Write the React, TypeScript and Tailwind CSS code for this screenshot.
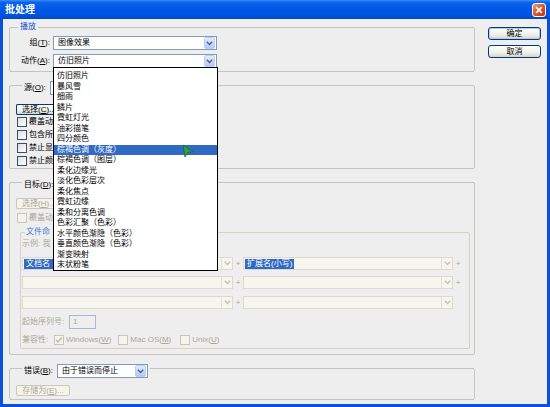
import React from "react";

const Chevron = ({ color = "#4D6185" }: { color?: string }) => (
  <svg width="7" height="5" viewBox="0 0 7 5">
    <path d="M0.8 0.8 L3.5 3.6 L6.2 0.8" fill="none" stroke={color} strokeWidth="1.4" />
  </svg>
);

function Select({ w, text }: { w: string; text?: string }) {
  return (
    <div className={`flex h-[14px] ${w} items-center border border-[#7F9DB9] bg-white`}>
      {text && <span className="pl-[4px] leading-none">{text}</span>}
      <div className="ml-auto mr-px flex h-[12px] w-[11px] items-center justify-center rounded-[2px] border border-[#B9CEF7] bg-[linear-gradient(180deg,#E3ECFD,#B3CAF8)]">
        <Chevron />
      </div>
    </div>
  );
}

function DSelect({ w, hl, hlw }: { w: string; hl?: string; hlw?: string }) {
  return (
    <div className={`flex h-[13px] ${w} items-center border border-[#DCDACB] bg-[#F6F5F0]`}>
      {hl && (
        <span className={`ml-px ${hlw ?? ""} whitespace-nowrap bg-[#316AC5] px-[2px] leading-[10px] text-white`}>{hl}</span>
      )}
      <div className="ml-auto flex h-full w-[11px] items-center justify-center border-l border-[#E2E0D4]">
        <Chevron color="#C6C4B6" />
      </div>
    </div>
  );
}

function Check({ disabled, checked }: { disabled?: boolean; checked?: boolean }) {
  return (
    <div
      className={
        disabled
          ? "flex h-[10px] w-[10px] shrink-0 items-center justify-center border border-[#C9C7BA] bg-[#F4F3EE]"
          : "flex h-[10px] w-[10px] shrink-0 items-center justify-center border border-[#35506C] bg-[linear-gradient(135deg,#DEDED9,#FFFFFF)]"
      }
    >
      {checked && (
        <svg width="8" height="8" viewBox="0 0 8 8">
          <path d="M1 4 L3 6 L7 1.5" fill="none" stroke="#BDBBAE" strokeWidth="1.4" />
        </svg>
      )}
    </div>
  );
}

const U = ({ c }: { c: string }) => <span className="underline underline-offset-1">{c}</span>;

const Plus = () => <span className="w-[10px] text-center text-[#ACA899]">+</span>;

const items = [
  "仿旧照片",
  "暴风雪",
  "细雨",
  "鳞片",
  "霓虹灯光",
  "油彩描笔",
  "四分颜色",
  "棕褐色调（灰度）",
  "棕褐色调（图层）",
  "柔化边缘光",
  "淡化色彩层次",
  "柔化焦点",
  "霓虹边缘",
  "柔和分离色调",
  "色彩汇聚（色彩）",
  "水平颜色渐隐（色彩）",
  "垂直颜色渐隐（色彩）",
  "渐变映射",
  "末状粉笔",
];

export default function App() {
  return (
    <div className="relative flex h-[407px] w-[550px] flex-col overflow-hidden bg-[#0A50DA] font-['Liberation_Sans','Noto_Sans_CJK_SC',sans-serif] text-[8px] leading-none text-black">
      {/* Title bar */}
      <div className="flex h-[19px] shrink-0 items-center justify-between bg-[linear-gradient(180deg,#3D8EF4_0%,#0B63EB_12%,#0058E6_45%,#0054DF_80%,#0046CA_100%)] pl-[5px] pr-[4px]">
        <span className="text-[10px] font-bold leading-none text-white">批处理</span>
        <div className="flex h-[14px] w-[14px] items-center justify-center rounded-[3px] border border-white bg-[linear-gradient(135deg,#F2A688,#E2572B_45%,#C5370E)]">
          <svg width="8" height="8" viewBox="0 0 8 8">
            <path d="M1.2 1.2L6.8 6.8M6.8 1.2L1.2 6.8" stroke="white" strokeWidth="1.7" />
          </svg>
        </div>
      </div>

      {/* Body */}
      <div className="mx-[3px] mb-[3px] flex flex-1 bg-[#EEEEEE]">
        {/* Left column */}
        <div className="ml-[6px] mt-[8px] flex w-[466px] flex-col">
          {/* Group 1 */}
          <div className="flex h-[45px] flex-col rounded-[2px] border border-[#C4C4C4]">
            <span className="-mt-[6px] ml-[8px] self-start bg-[#EEEEEE] px-[2px] leading-[10px] text-[#1F50D4]">播放</span>
            <div className="mt-[4px] flex items-center">
              <span className="w-[40px] text-right">
                组(<U c="T" />):
              </span>
              <div className="ml-[3px]">
                <Select w="w-[164px]" text="图像效果" />
              </div>
            </div>
            <div className="mt-[4px] flex items-center">
              <span className="w-[40px] text-right">
                动作(<U c="A" />):
              </span>
              <div className="ml-[3px]">
                <Select w="w-[164px]" text="仿旧照片" />
              </div>
            </div>
          </div>

          {/* Group 2 */}
          <div className="mt-[13px] flex h-[84px] flex-col rounded-[2px] border border-[#C4C4C4]">
            <div className="-mt-[5px] ml-[12px] flex items-center self-start bg-[#EEEEEE] px-[2px]">
              <span className="w-[24px] shrink-0 whitespace-nowrap">
                源(<U c="O" />):
              </span>
              <div className="ml-[2px]">
                <Select w="w-[160px]" />
              </div>
            </div>
            <div className="ml-[6px] mt-[9px] flex h-[11px] w-[40px] items-center whitespace-nowrap rounded-l-[2px] border border-r-0 border-[#003C74] bg-[linear-gradient(180deg,#FFFFFF,#F0F0EA_60%,#D8D5CA)] pl-[5px]">
              选择(<U c="C" />)..
            </div>
            {["覆盖动", "包含所", "禁止显", "禁止颜"].map((t) => (
              <div key={t} className="ml-[7px] flex h-[13px] items-center gap-[2px]">
                <Check />
                <span className="whitespace-nowrap">{t}</span>
              </div>
            ))}
          </div>

          {/* Group 3 */}
          <div className="mt-[13px] flex h-[173px] flex-col rounded-[2px] border border-[#C4C4C4]">
            <div className="-mt-[5px] ml-[12px] flex items-center self-start bg-[#EEEEEE] px-[2px]">
              <span className="w-[29px] shrink-0 whitespace-nowrap">
                目标(<U c="D" />):
              </span>
              <div className="ml-[2px]">
                <Select w="w-[140px]" />
              </div>
            </div>
            <div className="ml-[6px] mt-[6px] flex h-[11px] w-[40px] items-center whitespace-nowrap rounded-l-[2px] border border-r-0 border-[#CAC8BB] bg-[#F5F4EA] pl-[5px] text-[#ACA899]">
              选择(<U c="H" />)..
            </div>
            <div className="ml-[7px] mt-[3px] flex h-[12px] items-center gap-[2px] text-[#ACA899]">
              <Check disabled />
              <span className="whitespace-nowrap">覆盖动</span>
            </div>

            {/* Inner group */}
            <div className="ml-[10px] mr-[4px] mt-[8px] flex h-[117px] flex-col rounded-[2px] border border-[#D6D3C4]">
              <span className="-mt-[6px] ml-[4px] w-[28px] self-start whitespace-nowrap bg-[#EEEEEE] px-[1px] leading-[10px] text-[#4A78D8]">
                文件命
              </span>
              <div className="ml-[1px] mt-[2px] flex h-[10px] items-center whitespace-nowrap text-[#ACA899]">示例: 我</div>
              <div className="ml-[1px] mt-[8px] flex items-center">
                <DSelect w="w-[211px]" hl="文档名" hlw="w-[31px]" />
                <Plus />
                <DSelect w="w-[210px]" hl="扩展名(小写)" />
                <Plus />
              </div>
              <div className="ml-[1px] mt-[6px] flex items-center">
                <DSelect w="w-[211px]" />
                <Plus />
                <DSelect w="w-[210px]" />
                <Plus />
              </div>
              <div className="ml-[1px] mt-[7px] flex items-center">
                <DSelect w="w-[211px]" />
                <Plus />
                <DSelect w="w-[210px]" />
              </div>
              <div className="ml-[1px] mt-[6px] flex items-center text-[#ACA899]">
                <span className="w-[47px] whitespace-nowrap">起始序列号:</span>
                <div className="flex h-[14px] w-[27px] items-center border border-[#A9B8CC] bg-[#EEEEEE] pl-[3px]">1</div>
              </div>
              <div className="ml-[1px] mt-[5px] flex h-[12px] items-center whitespace-nowrap text-[#ACA899]">
                <span className="w-[32px]">兼容性:</span>
                <Check disabled checked />
                <span className="ml-[2px]">
                  Windows(<U c="W" />)
                </span>
                <div className="ml-[7px]">
                  <Check disabled />
                </div>
                <span className="ml-[2px]">
                  Mac OS(<U c="M" />)
                </span>
                <div className="ml-[9px]">
                  <Check disabled />
                </div>
                <span className="ml-[2px]">
                  Unix(<U c="U" />)
                </span>
              </div>
            </div>
          </div>

          {/* Group 4 */}
          <div className="mt-[13px] flex h-[32px] flex-col rounded-[2px] border border-[#C4C4C4]">
            <div className="-mt-[5px] ml-[12px] flex items-center self-start bg-[#EEEEEE] px-[2px]">
              <span className="w-[31px] shrink-0 whitespace-nowrap">
                错误(<U c="B" />):
              </span>
              <div className="ml-[2px]">
                <Select w="w-[91px]" text="由于错误而停止" />
              </div>
            </div>
            <div className="ml-[6px] mt-[7px] flex h-[11px] w-[54px] items-center justify-center whitespace-nowrap rounded-[2px] border border-[#CAC8BB] bg-[#F5F4EA] text-[#ACA899]">
              存储为(<U c="E" />)...
            </div>
          </div>
        </div>

        {/* Right column */}
        <div className="ml-[13px] mt-[8px] flex w-[53px] flex-col gap-[5px]">
          <div className="flex h-[13px] items-center justify-center rounded-[3px] border border-[#003C74] bg-[linear-gradient(180deg,#FFFFFF,#F0F0EA_60%,#D8D5CA)] shadow-[inset_0_0_0_1px_#B4C8F0]">
            确定
          </div>
          <div className="flex h-[13px] items-center justify-center rounded-[3px] border border-[#003C74] bg-[linear-gradient(180deg,#FFFFFF,#F0F0EA_60%,#D8D5CA)]">
            取消
          </div>
        </div>
      </div>

      {/* Dropdown list overlay */}
      <div className="absolute left-[53px] top-[67px] flex h-[204px] w-[165px] flex-col border border-black bg-white pt-[3px]">
        {items.map((t, i) => (
          <div
            key={t}
            className={
              i === 7
                ? "h-[10.5px] whitespace-nowrap bg-[#316AC5] pl-[3px] leading-[10.5px] text-white"
                : "h-[10.5px] whitespace-nowrap pl-[3px] leading-[10.5px]"
            }
          >
            {t}
          </div>
        ))}
      </div>

      {/* Cursor */}
      <svg className="absolute left-[182px] top-[144px]" width="12" height="14" viewBox="0 0 12 14">
        <polygon points="1,1 11,8 6,8.3 3,13" fill="#2FA23A" stroke="#1B6E24" strokeWidth="0.8" />
      </svg>
    </div>
  );
}
